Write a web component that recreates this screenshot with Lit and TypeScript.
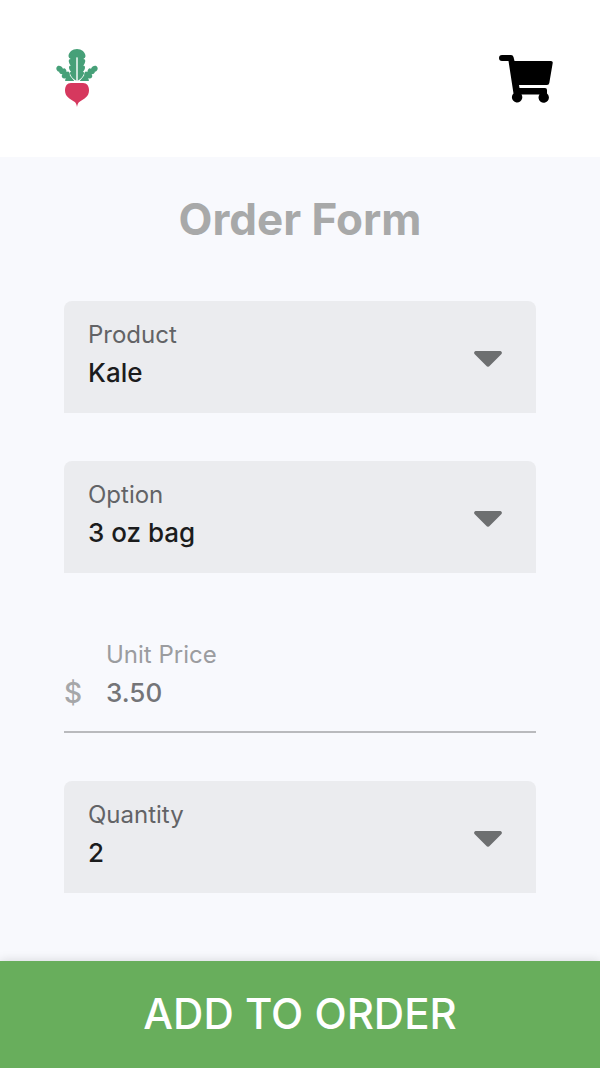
import { LitElement, html, css, svg } from "lit";
import { customElement, property } from "lit/decorators.js";

const beetLogo = svg`
  <svg width="42" height="58" viewBox="0 0 42 58" aria-hidden="true">
    <g fill="#46a078">
      <path d="M21 0C25.500 0 29.500 3.200 29.500 7.200Q29.500 9 27.300 10Q29.500 10.200 29.300 12Q29 13.500 28.500 14.800Q28 16 27.200 16.500Q29.200 16.500 29 18.500Q29 20 28 21.400Q27.600 22.200 26.800 22.700Q28.500 22.800 28 24.600C27.300 27.300 25 30 21.700 31.800V9Q21 7 20.300 9V31.800C17 30 14.700 27.300 14 24.600Q13.500 22.800 15.200 22.700Q14.400 22.200 14 21.400Q13 20 13 18.500Q12.800 16.500 14.800 16.500Q14 16 13.500 14.800Q13 13.500 12.700 12Q12.500 10.200 14.700 10Q12.500 9 12.500 7.200C12.500 3.200 16.500 0 21 0Z"/>
      <path d="M18.300 32H9.300Q8.700 30.500 10.200 29.300Q7 30 6 28.300Q5.300 26.500 6.500 25.300Q4 25.500 3.200 23.500L3.300 22.800C.2 22.300-.6 18.700 1.400 17.200C3.300 16 6 17.300 7 19.800Q8.300 18.600 9.500 19.900Q10.500 21 10.600 23Q12.500 21.800 13.500 23.800Q14 25 13.800 26.500Z"/>
      <path d="M23.700 32H32.700Q33.300 30.500 31.800 29.300Q35 30 36 28.300Q36.700 26.500 35.500 25.300Q38 25.500 38.800 23.500L38.700 22.800C41.800 22.300 42.600 18.700 40.600 17.200C38.700 16 36 17.300 35 19.800Q33.700 18.600 32.500 19.900Q31.500 21 31.400 23Q29.500 21.800 28.500 23.800Q28 25 28.200 26.500Z"/>
    </g>
    <path fill="#d6385e" d="M15 34H27C31 34 33 37 33 41.500C33 47.500 28 50 24 52.500C22.300 53.500 21.500 55 21 58C20.500 55 19.700 53.500 18 52.500C14 50 9 47.500 9 41.500C9 37 11 34 15 34Z"/>
  </svg>`;

const cartIcon = svg`
  <svg width="54" height="50" viewBox="0 -2 54 50" aria-hidden="true">
    <path d="M3 0H12Q14 0 14.500 2L15.500 6H52Q54 6 53.700 8L50.300 28Q50 30 48 30H20L20.500 33H46Q48 33 48 35V38.500A5.200 5.200 0 1 1 40.500 39.500H22.500A5.200 5.200 0 1 1 14.500 38.500L9.500 6H3A3 3 0 0 1 3 0Z"/>
  </svg>`;

const arrowIcon = svg`
  <svg class="arrow" width="28" height="16" viewBox="0 0 28 16" aria-hidden="true">
    <path fill="#6d6f70" d="M1.500 0H26.500Q28.700 1 27.500 3L16 14.500Q14 17 12 14.500L.5 3Q-.7 1 1.500 0Z"/>
  </svg>`;

@customElement("select-field")
class SelectField extends LitElement {
  @property() label = "";
  @property() value = "";
  @property({ attribute: false }) options: string[] = [];

  static styles = css`
    :host { display: block; }
    .field {
      display: grid;
      grid-template-columns: 1fr auto;
      background: #ebecef;
      border-radius: 8px 8px 0 0;
    }
    .label {
      grid-area: 1 / 1 / 2 / 2;
      align-self: start;
      padding: 20px 0 0 24px;
      font-size: 24px;
      font-weight: 400;
      line-height: 28px;
      color: #626366;
      pointer-events: none;
      z-index: 1;
    }
    .control {
      grid-area: 1 / 1 / 2 / 3;
      appearance: none;
      box-sizing: border-box;
      width: 100%;
      height: 112px;
      margin: 0;
      padding: 54px 72px 22px 24px;
      border: 0;
      border-radius: 8px 8px 0 0;
      background: transparent;
      color: #1b1c1d;
      font: inherit;
      font-size: 26px;
      line-height: 36px;
    }
    .arrow {
      grid-area: 1 / 2 / 2 / 3;
      align-self: center;
      margin: 4px 34px 0 0;
      pointer-events: none;
      z-index: 1;
    }
  `;

  render() {
    return html`
      <div class="field">
        <label class="label" for="control">${this.label}</label>
        <select class="control" id="control">
          ${this.options.map(
            (o) => html`<option ?selected=${o === this.value}>${o}</option>`
          )}
        </select>
        ${arrowIcon}
      </div>
    `;
  }
}

@customElement("price-field")
class PriceField extends LitElement {
  @property() label = "";
  @property() value = "";

  static styles = css`
    :host { display: block; }
    .field {
      box-sizing: border-box;
      display: grid;
      grid-template-columns: 18px 1fr;
      column-gap: 24px;
      padding: 20px 0 20px;
      border-bottom: 2px solid #b9babd;
    }
    .label {
      grid-column: 2;
      font-size: 24px;
      font-weight: 400;
      line-height: 28px;
      color: #9b9c9f;
    }
    .prefix {
      grid-column: 1;
      padding-top: 6px;
      font-size: 28px;
      line-height: 36px;
      color: #a6a7a9;
    }
    .control {
      grid-column: 2;
      box-sizing: border-box;
      width: 100%;
      height: 36px;
      margin: 6px 0 0;
      padding: 0;
      border: 0;
      background: transparent;
      color: #747578;
      font: inherit;
      font-size: 26px;
      line-height: 36px;
    }
  `;

  render() {
    return html`
      <div class="field">
        <label class="label" for="control">${this.label}</label>
        <span class="prefix">$</span>
        <input class="control" id="control" type="text" .value=${this.value} disabled />
      </div>
    `;
  }
}

@customElement("app-root")
class AppRoot extends LitElement {
  static styles = css`
    :host {
      display: flex;
      flex-direction: column;
      min-height: 100vh;
      background: #f8f9fd;
      font-family: Inter, "Open Sans", sans-serif;
      font-weight: 500;
    }
    .header {
      display: flex;
      justify-content: space-between;
      align-items: center;
      padding: 49px 47px 50px 56px;
      background: #fff;
    }
    .link { display: flex; color: #000; }
    .form {
      flex: 1;
      display: flex;
      flex-direction: column;
    }
    .title {
      margin: 0;
      padding: 36px 0 56px;
      text-align: center;
      font-size: 44px;
      line-height: 52px;
      font-weight: 700;
      color: #a8a9a9;
    }
    .fields {
      display: flex;
      flex-direction: column;
      gap: 48px;
      padding: 0 64px 48px;
    }
    .submit {
      margin: auto 0 0;
      padding: 27px 24px 28px;
      border: 0;
      background: #68ae5c;
      box-shadow: 0 0 10px rgba(0, 0, 0, 0.15);
      color: #fff;
      font: inherit;
      font-size: 42px;
      line-height: 52px;
      text-transform: uppercase;
    }
  `;

  render() {
    return html`
      <header class="header">
        <a class="link" href="#home" aria-label="Home">${beetLogo}</a>
        <a class="link" href="#cart" aria-label="Cart">${cartIcon}</a>
      </header>
      <form class="form" @submit=${(e: Event) => e.preventDefault()}>
        <h1 class="title">Order Form</h1>
        <div class="fields">
          <select-field label="Product" value="Kale" .options=${["Kale"]}></select-field>
          <select-field label="Option" value="3 oz bag" .options=${["3 oz bag"]}></select-field>
          <price-field label="Unit Price" value="3.50"></price-field>
          <select-field label="Quantity" value="2" .options=${["1", "2", "3"]}></select-field>
        </div>
        <button class="submit" type="submit">Add to order</button>
      </form>
    `;
  }
}
